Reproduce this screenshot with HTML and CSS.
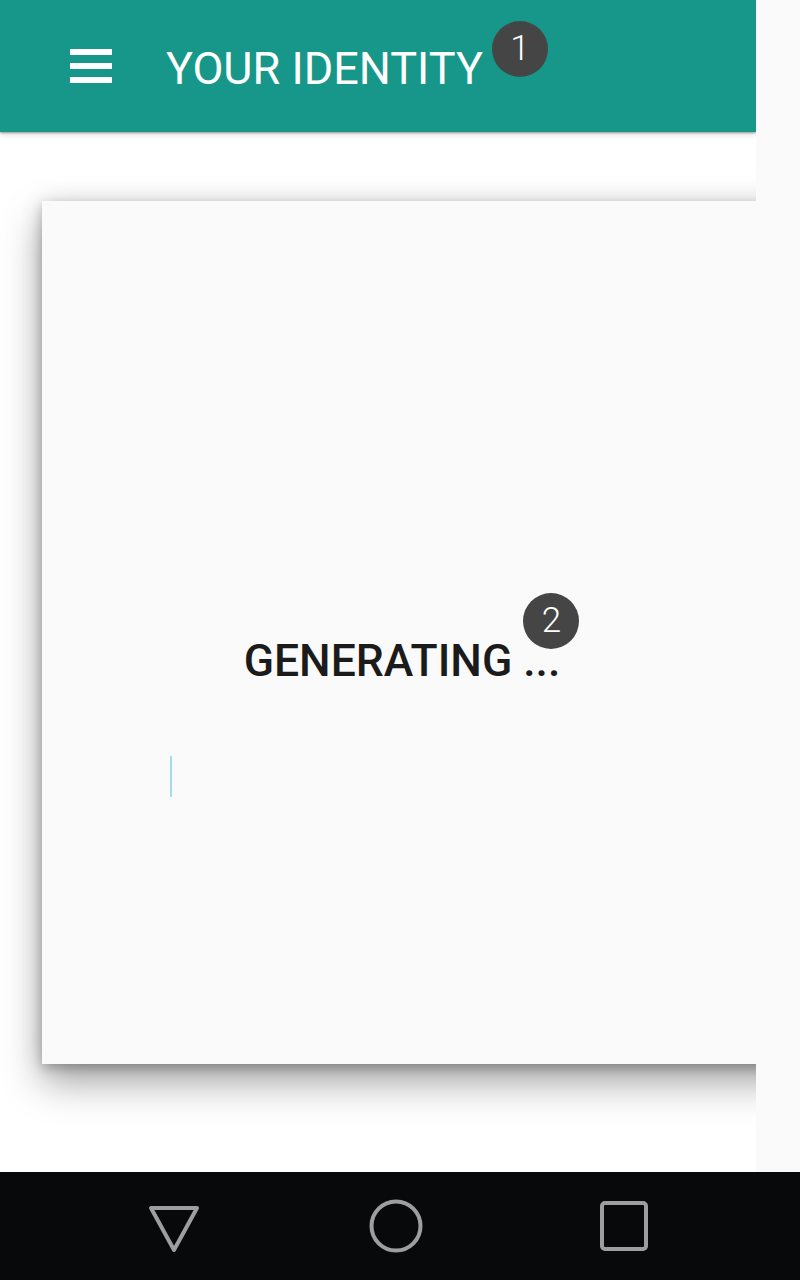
FILE: index.html
```html
<!DOCTYPE html>
<html>
<head>
<meta charset="utf-8">
<title>Your Identity</title>
<link rel="stylesheet" href="styles.css">
</head>
<body>
<div class="screen">
  <div class="main">
    <div class="app">
      <header class="appbar">
        <div class="menu"><span></span><span></span><span></span></div>
        <h1 class="title">YOUR IDENTITY<span class="badge badge-title">1</span></h1>
      </header>
      <div class="content">
        <div class="card">
          <div class="status"><span class="status-text">GENERATING ...<span class="badge badge-status">2</span></span></div>
          <div class="cursor"></div>
        </div>
      </div>
    </div>
    <div class="side"></div>
  </div>
  <nav class="navbar">
    <svg class="nav-back" width="52" height="48" viewBox="0 0 52 48"><polygon points="3,3 49,3 26,45" fill="none" stroke="#9e9e9e" stroke-width="4" stroke-linejoin="round"/></svg>
    <svg class="nav-home" width="54" height="54" viewBox="0 0 54 54"><circle cx="27" cy="27" r="24.5" fill="none" stroke="#9e9e9e" stroke-width="4"/></svg>
    <svg class="nav-recent" width="48" height="50" viewBox="0 0 48 50"><rect x="2" y="2" width="44" height="46" rx="3" fill="none" stroke="#9e9e9e" stroke-width="4"/></svg>
  </nav>
</div>
</body>
</html>
```
FILE: styles.css
```css
* { box-sizing: border-box; }
html, body { margin: 0; padding: 0; }
body {
  font-family: Roboto, "Liberation Sans", Arial, sans-serif;
  background: #fafafa;
}
.screen {
  width: 800px;
  height: 1280px;
  display: flex;
  flex-direction: column;
}
.main {
  display: flex;
  height: 1172px;
}
.app {
  width: 756px;
  flex: none;
  display: flex;
  flex-direction: column;
  background: #ffffff;
  overflow: hidden;
}
.side {
  flex: 1;
  background: #fafafa;
}
.appbar {
  height: 132px;
  flex: none;
  background: #16978a;
  display: flex;
  align-items: center;
  padding-left: 70px;
  gap: 54px;
  position: relative;
  z-index: 2;
  box-shadow: 0 1px 2px rgba(0,0,0,0.35), 0 3px 6px rgba(0,0,0,0.12);
}
.menu {
  width: 42px;
  display: flex;
  flex-direction: column;
  gap: 8px;
}
.menu span {
  display: block;
  height: 6px;
  background: #ffffff;
}
.title {
  margin: 5px 0 0 0;
  font-size: 45px;
  line-height: 45px;
  font-weight: 400;
  color: #ffffff;
  position: relative;
  white-space: nowrap;
}
.badge {
  position: absolute;
  width: 56px;
  height: 56px;
  border-radius: 50%;
  background: #454545;
  color: #ffffff;
  font-size: 35px;
  font-weight: 300;
  line-height: 56px;
  text-align: center;
}
.badge-title {
  left: calc(100% + 9px);
  top: -25px;
}
.content {
  flex: 1;
  padding-top: 69px;
  background: #ffffff;
}
.card {
  margin-left: 42px;
  width: 760px;
  height: 863px;
  background: #fafafa;
  padding-top: 438px;
  box-shadow: 0 18px 36px rgba(0,0,0,0.36), 0 4px 10px rgba(0,0,0,0.2), 0 0 22px rgba(0,0,0,0.1);
}
.status {
  width: 720px;
  text-align: center;
  font-size: 44.5px;
  line-height: 45px;
  font-weight: 500;
  color: #1b1b1b;
}
.status-text {
  position: relative;
  display: inline-block;
}
.badge-status {
  left: calc(100% - 37px);
  top: -46px;
}
.cursor {
  margin: 72px 0 0 128px;
  width: 2px;
  height: 41px;
  background: #a3dde9;
}
.navbar {
  height: 108px;
  flex: none;
  background: #08090b;
  display: flex;
  align-items: center;
  padding-left: 148px;
}
.nav-back { margin-top: 6px; }
.nav-home { margin-left: 169px; }
.nav-recent { margin-left: 177px; }
```
